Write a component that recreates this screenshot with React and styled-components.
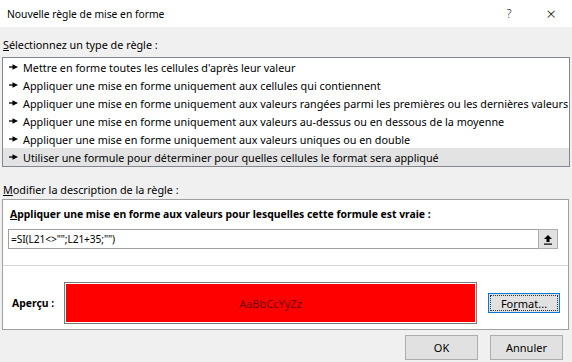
import React from 'react';
import styled, { createGlobalStyle } from 'styled-components';

const GlobalStyle = createGlobalStyle`
  html, body {
    margin: 0;
    padding: 0;
    background: #f0f0f0;
  }
`;

const Window = styled.div`
  width: 572px;
  height: 362px;
  background: #f0f0f0;
  font-family: 'Noto Sans', 'Open Sans', sans-serif;
  font-size: 10.8px;
  color: #000;
  display: flex;
  flex-direction: column;
  overflow: hidden;
`;

const TitleBar = styled.div`
  height: 27px;
  background: #fff;
  display: flex;
  align-items: center;
  padding-left: 7px;
`;

const Title = styled.span`
  flex: 1;
  font-size: 10.3px;
`;

const TitleButton = styled.span`
  width: 42px;
  text-align: center;
  font-size: ${(p) => (p.big ? '17px' : '12px')};
  font-weight: 300;
  color: #222;
`;

const Body = styled.div`
  padding: 0 2px;
  display: flex;
  flex-direction: column;
`;

const SectionLabel = styled.div`
  height: 16px;
  line-height: 16px;
  margin-top: ${(p) => p.top}px;
  padding-left: 1px;
`;

const Accel = styled.span`
  text-decoration: underline;
  text-underline-offset: 1px;
`;

const ListBox = styled.div`
  border: 1px solid #828790;
  background: #fff;
  margin-top: 4px;
  width: 566px;
`;

const Row = styled.div`
  height: 18px;
  display: flex;
  align-items: center;
  background: ${(p) => (p.selected ? '#e3e3e3' : '#fff')};
  white-space: nowrap;
`;

const Bullet = styled.svg`
  width: 9px;
  height: 6px;
  margin: 0 5px 0 6px;
  flex: none;
`;

const Panel = styled.div`
  margin-top: 1px;
  width: 565px;
  border: 1px solid #a0a0a0;
  background: #fff;
  display: flex;
  flex-direction: column;
`;

const PanelHeading = styled.div`
  font-weight: 700;
  font-size: 10.4px;
  height: 16px;
  line-height: 16px;
  margin: 6px 0 0 7px;
`;

const InputRow = styled.div`
  margin: 7px 0 0 5px;
  display: flex;
  height: 20px;
`;

const FormulaInput = styled.div`
  width: 527px;
  border: 1px solid #a0a0a0;
  border-right: none;
  padding-left: 2px;
  line-height: 18px;
  font-size: 10.2px;
  letter-spacing: -0.1px;
`;

const CollapseButton = styled.div`
  width: 18px;
  height: 18px;
  border: 1px solid #adadad;
  background: #e1e1e1;
  display: flex;
  align-items: center;
  justify-content: center;
`;

const Separator = styled.div`
  height: 1px;
  background: #d4d4d4;
  margin-top: 16px;
`;

const PreviewRow = styled.div`
  display: flex;
  align-items: center;
  margin: 16px 0 5px 0;
`;

const PreviewLabel = styled.span`
  font-weight: 700;
  font-size: 10.4px;
  width: 52px;
  padding-left: 9px;
`;

const PreviewBox = styled.div`
  width: 409px;
  height: 38px;
  border: 1px solid #7a7a7a;
  padding: 1px;
  background: #fff;
  display: flex;
`;

const RedFill = styled.div`
  flex: 1;
  background: #ff0000;
  display: flex;
  align-items: center;
  justify-content: center;
  color: #6e0000;
  font-size: 11px;
`;

const Button = styled.div`
  width: ${(p) => p.w}px;
  height: ${(p) => p.h}px;
  box-sizing: border-box;
  border: 1px solid ${(p) => (p.focused ? '#0078d7' : '#adadad')};
  background: #e1e1e1;
  display: flex;
  align-items: center;
  justify-content: center;
  margin-left: ${(p) => p.ml || 0}px;
  position: relative;
  font-size: 11px;
  ${(p) =>
    p.focused &&
    `
    &::after {
      content: '';
      position: absolute;
      inset: 1px;
      border: 1px dotted #333;
    }
  `}
`;

const Footer = styled.div`
  display: flex;
  justify-content: flex-end;
  padding: 5px 7px 0 0;
  gap: 12px;
`;

const rules = [
  "Mettre en forme toutes les cellules d'après leur valeur",
  'Appliquer une mise en forme uniquement aux cellules qui contiennent',
  'Appliquer une mise en forme uniquement aux valeurs rangées parmi les premières ou les dernières valeurs',
  'Appliquer une mise en forme uniquement aux valeurs au-dessus ou en dessous de la moyenne',
  'Appliquer une mise en forme uniquement aux valeurs uniques ou en double',
  'Utiliser une formule pour déterminer pour quelles cellules le format sera appliqué',
];

const Arrow = () => (
  <Bullet viewBox="0 0 9 6">
    <path d="M0 3h5" stroke="#000" strokeWidth="1.3" />
    <path d="M3.5 0.3L9 3L3.5 5.7Z" fill="#000" />
  </Bullet>
);

const App = () => (
  <Window>
    <GlobalStyle />
    <TitleBar>
      <Title>Nouvelle règle de mise en forme</Title>
      <TitleButton>?</TitleButton>
      <TitleButton big>×</TitleButton>
    </TitleBar>
    <Body>
      <SectionLabel top={10}>
        <Accel>S</Accel>électionnez un type de règle :
      </SectionLabel>
      <ListBox>
        {rules.map((r, i) => (
          <Row key={r} selected={i === rules.length - 1}>
            <Arrow />
            {r}
          </Row>
        ))}
      </ListBox>
      <SectionLabel top={15}>
        <Accel>M</Accel>odifier la description de la règle :
      </SectionLabel>
      <Panel>
        <PanelHeading>
          <Accel>A</Accel>ppliquer une mise en forme aux valeurs pour lesquelles cette formule est vraie :
        </PanelHeading>
        <InputRow>
          <FormulaInput>=SI(L21&lt;&gt;"";L21+35;"")</FormulaInput>
          <CollapseButton>
            <svg width="10" height="11" viewBox="0 0 10 11">
              <path d="M5 1L1 5h2.5v3h3V5H9Z" fill="#000" />
              <rect x="1" y="9.5" width="8" height="1.2" fill="#000" />
            </svg>
          </CollapseButton>
        </InputRow>
        <Separator />
        <PreviewRow>
          <PreviewLabel>Aperçu :</PreviewLabel>
          <PreviewBox>
            <RedFill>AaBbCcYyZz</RedFill>
          </PreviewBox>
          <Button w={72} h={20} ml={11} focused>
            Fo<Accel>r</Accel>mat...
          </Button>
        </PreviewRow>
      </Panel>
      <Footer>
        <Button w={73} h={25}>OK</Button>
        <Button w={73} h={25}>Annuler</Button>
      </Footer>
    </Body>
  </Window>
);

export default App;
